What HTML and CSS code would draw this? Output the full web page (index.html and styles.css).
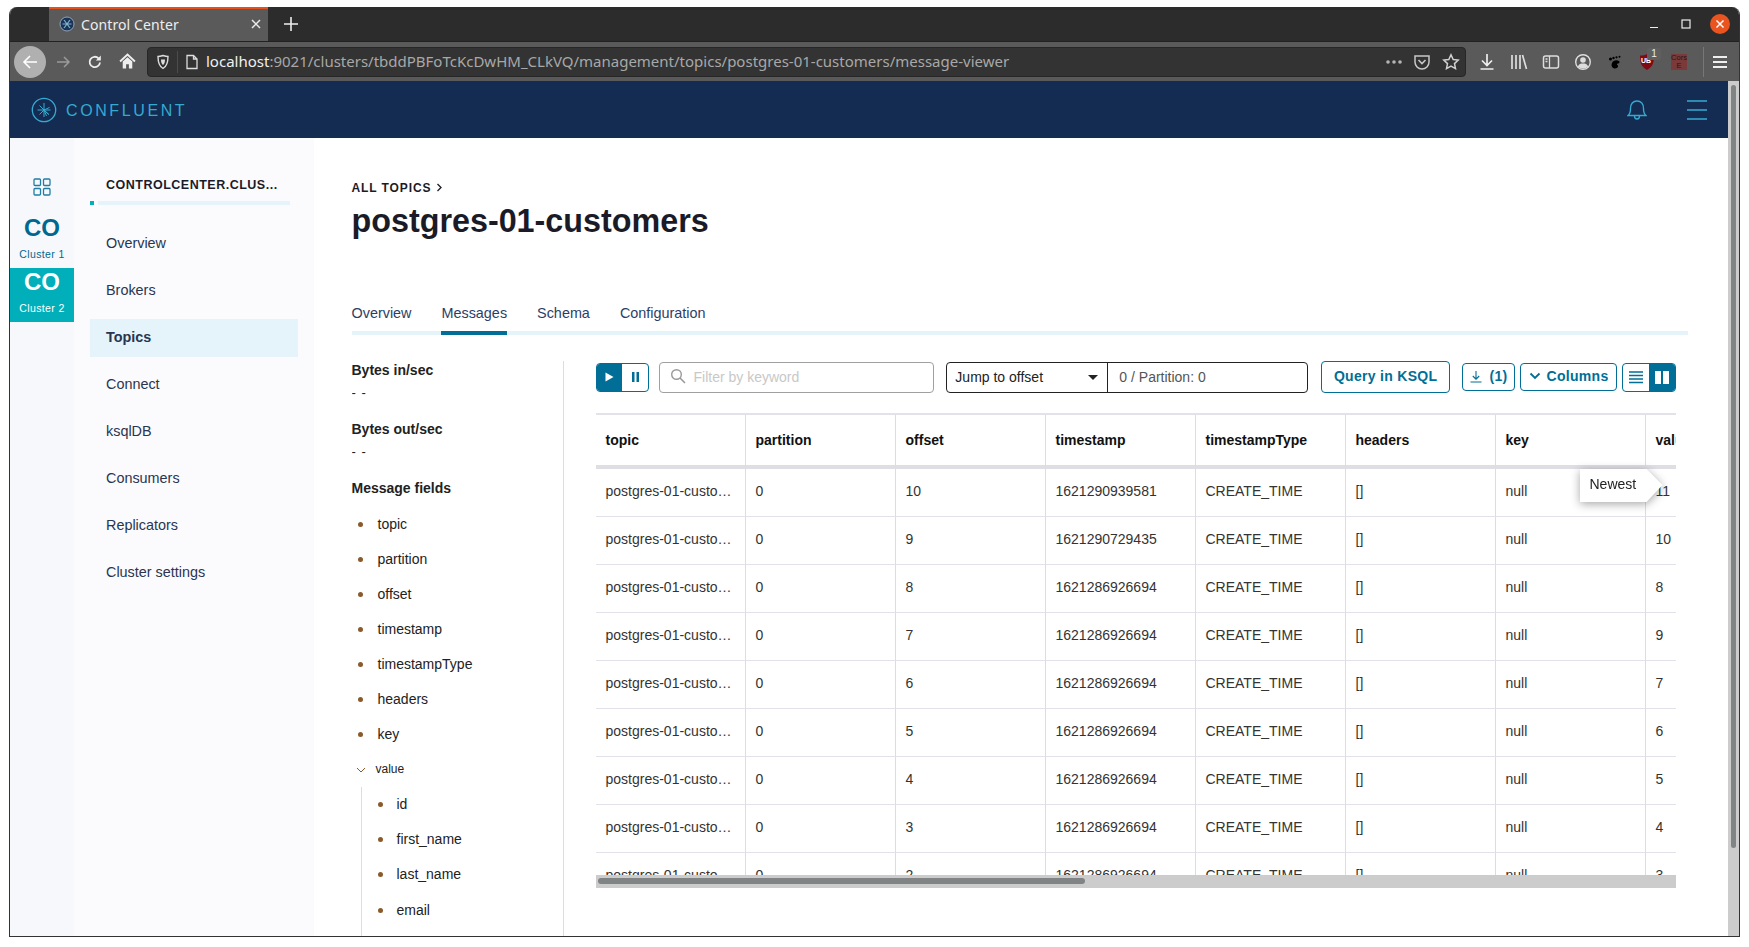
FILE: index.html
```html
<!DOCTYPE html>
<html lang="en">
<head>
  <meta charset="UTF-8">
  <title>Control Center</title>
  <link rel="stylesheet" href="styles.css">
</head>
<body>
<div class="window">

  <!-- Browser tabs -->
  <div class="tabbar">
    <div class="tab">
      <svg class="favicon" width="16" height="16" viewBox="0 0 16 16"><circle cx="8" cy="8" r="7" fill="#1c3358" stroke="#8fa3b8" stroke-width="1"/><path d="M5 4l6 8M11 4l-6 8M3.5 8h9" stroke="#7fb4cc" stroke-width="1.2"/></svg>
      <span class="tab-title">Control Center</span>
      <svg class="tab-close" width="12" height="12" viewBox="0 0 12 12"><path d="M2 2l8 8M10 2l-8 8" stroke="#e8e8e8" stroke-width="1.5"/></svg>
    </div>
    <svg class="tab-new" width="16" height="16" viewBox="0 0 16 16"><path d="M8 1v14M1 8h14" stroke="#eee" stroke-width="1.6"/></svg>
    <div class="winctl">
      <span class="winbtn"><svg width="12" height="12" viewBox="0 0 12 12"><path d="M2 9.5h8" stroke="#eee" stroke-width="1.2"/></svg></span>
      <span class="winbtn"><svg width="12" height="12" viewBox="0 0 12 12"><rect x="2" y="2" width="8" height="8" fill="none" stroke="#eee" stroke-width="1.2"/></svg></span>
      <span class="winbtn winbtn-close"><svg width="10" height="10" viewBox="0 0 10 10"><path d="M1 1l8 8M9 1l-8 8" stroke="#fff" stroke-width="1.5"/></svg></span>
    </div>
  </div>

  <!-- Browser toolbar -->
  <div class="toolbar">
    <span class="tbtn tbtn-back"><svg width="18" height="18" viewBox="0 0 18 18"><path d="M16 9H3M9 3L3 9l6 6" fill="none" stroke="#fff" stroke-width="1.6"/></svg></span>
    <span class="tbtn tbtn-fwd"><svg width="16" height="16" viewBox="0 0 16 16"><path d="M2 8h12M9 3l5 5-5 5" fill="none" stroke="#9a9a9a" stroke-width="1.5"/></svg></span>
    <span class="tbtn"><svg width="16" height="16" viewBox="0 0 16 16"><path d="M13 8.5A5.2 5.2 0 1 1 11.5 4.3" fill="none" stroke="#eee" stroke-width="1.8"/><path d="M13.8 1.5v5h-5z" fill="#eee"/></svg></span>
    <span class="tbtn"><svg width="17" height="17" viewBox="0 0 16 16"><path d="M1 8l7-6.5L15 8" fill="none" stroke="#eee" stroke-width="1.7"/><path d="M3.5 8L8 4l4.5 4v6.5H9.300v-4H6.700v4H3.500z" fill="#eee"/></svg></span>
    <div class="urlbar">
      <svg class="url-shield" width="16" height="16" viewBox="0 0 16 16"><path d="M3 2.5c3 0 4-.8 5-1 1 .2 2 1 5 1 0 5-.5 9.5-5 12-4.500-2.500-5-7-5-12z" fill="none" stroke="#ddd" stroke-width="1.4"/><path d="M6 5.5h4c0 2.5-.5 4.5-2 5.5-1.5-1-2-3-2-5.5z" fill="#ddd"/></svg>
      <span class="url-sep"></span>
      <svg class="url-page" width="16" height="16" viewBox="0 0 16 16"><path d="M3 1.500h6.500L13 5v9.500H3zM9.500 1.500V5H13" fill="none" stroke="#ddd" stroke-width="1.3"/></svg>
      <span class="url-text"><b>localhost</b>:9021/clusters/tbddPBFoTcKcDwHM_CLkVQ/management/topics/postgres-01-customers/message-viewer</span>
      <div class="url-actions">
        <span class="uact"><svg width="18" height="6" viewBox="0 0 18 6"><circle cx="3" cy="3" r="1.8" fill="#b5b5b5"/><circle cx="9" cy="3" r="1.8" fill="#b5b5b5"/><circle cx="15" cy="3" r="1.8" fill="#b5b5b5"/></svg></span>
        <span class="uact"><svg width="18" height="18" viewBox="0 0 18 18"><path d="M2 3h14v6a7 7 0 0 1-14 0z" fill="none" stroke="#c8c8c8" stroke-width="1.5"/><path d="M5.5 7L9 10.5 12.5 7" fill="none" stroke="#c8c8c8" stroke-width="1.6"/></svg></span>
        <span class="uact"><svg width="18" height="18" viewBox="0 0 18 18"><path d="M9 1.8l2.2 4.700 5 .6-3.700 3.500 1 5L9 13.200l-4.500 2.400 1-5L1.800 7.100l5-.6z" fill="none" stroke="#d0d0d0" stroke-width="1.5"/></svg></span>
      </div>
    </div>
    <div class="tools">
      <span class="tbtn"><svg width="18" height="18" viewBox="0 0 18 18"><path d="M9 1v11M4 7.500L9 12.500l5-5M2.500 16h13" fill="none" stroke="#eee" stroke-width="1.7"/></svg></span>
      <span class="tbtn"><svg width="18" height="18" viewBox="0 0 18 18"><path d="M2 2v14M6 2v14M10 2v14M12.500 2l4 14" fill="none" stroke="#ddd" stroke-width="1.7"/></svg></span>
      <span class="tbtn"><svg width="18" height="18" viewBox="0 0 18 18"><rect x="1.5" y="3" width="15" height="12" rx="2" fill="none" stroke="#ddd" stroke-width="1.5"/><path d="M7.500 3v12M3.500 6h2M3.500 8.500h2" stroke="#ddd" stroke-width="1.3"/></svg></span>
      <span class="tbtn"><svg width="18" height="18" viewBox="0 0 18 18"><circle cx="9" cy="9" r="7.3" fill="none" stroke="#ddd" stroke-width="1.4"/><circle cx="9" cy="7" r="2.8" fill="#ddd"/><path d="M3.800 13.500c1-2.500 3-3 5.200-3s4.200.5 5.200 3c-3 2.500-7.400 2.500-10.400 0z" fill="#ddd"/></svg></span>
      <span class="tbtn"><svg width="16" height="16" viewBox="0 0 16 16"><path d="M5 9c1-3 5-3.500 7-2 1 1 .5 2.500-1 2.500-1.500.3-1 1.500-.2 1.800.8 1-.3 3.500-3 3.200C4.800 14.200 4 11.500 5 9z" fill="#000"/><circle cx="3.5" cy="5" r="1.5" fill="#000"/><circle cx="6.5" cy="4" r="1.2" fill="#000"/><circle cx="9.5" cy="3.3" r="1.1" fill="#000"/><circle cx="12.5" cy="2.8" r="1" fill="#000"/></svg></span>
      <span class="tbtn tbtn-ub">
        <svg width="16" height="18" viewBox="0 0 16 18"><path d="M1 2.500C4 2.500 6 2 8 1c2 1 4 1.500 7 1.500 0 6-.5 11-7 14.500C1.500 13.500 1 8.500 1 2.500z" fill="#800a14"/></svg>
        <span class="ub-text">UB</span>
        <span class="ub-badge">1</span>
      </span>
      <span class="tbtn"><span class="cors">Cors<br>E</span></span>
      <span class="tool-sep"></span>
      <span class="tbtn"><svg width="16" height="14" viewBox="0 0 16 14"><path d="M1 2h14M1 7h14M1 12h14" stroke="#eee" stroke-width="2"/></svg></span>
    </div>
  </div>

  <div class="viewport">
    <div class="app">

      <!-- Top bar -->
      <header class="topnav">
        <svg class="logo-mark" width="26" height="26" viewBox="0 0 26 26"><circle cx="13" cy="13" r="11.7" fill="none" stroke="#36a9d0" stroke-width="1.3"/><path d="M13 6v14M6.500 13h13M8.500 8.500l9 9M13 13l5.500-2.500M13 13l5 4.500M13 13l2.500 6M13 13l-4.500 4.500" stroke="#36a9d0" stroke-width="1"/></svg>
        <span class="logo-text">CONFLUENT</span>
        <div class="topnav-right">
          <svg width="20" height="22" viewBox="0 0 20 22"><path d="M1 16.500c2-1.500 2.500-3 2.500-7C3.500 5 6 2 10 2s6.500 3 6.500 7.500c0 4 .5 5.500 2.500 7z" fill="none" stroke="#36a9d0" stroke-width="1.4"/><path d="M7.500 17c0 4 5 4 5 0" fill="none" stroke="#36a9d0" stroke-width="1.4"/></svg>
          <svg width="20" height="20" viewBox="0 0 20 20"><path d="M0 1h20M0 10h20M0 19h20" stroke="#36a9d0" stroke-width="1.3"/></svg>
        </div>
      </header>

      <div class="content">

        <!-- Cluster switcher -->
        <aside class="rail">
          <svg class="rail-grid" width="18" height="18" viewBox="0 0 18 18"><g fill="none" stroke="#1f7ea5" stroke-width="1.3"><rect x="1" y="1" width="6.500" height="6.500" rx="1"/><rect x="10.500" y="1" width="6.500" height="6.500" rx="1"/><rect x="1" y="10.500" width="6.500" height="6.500" rx="1"/><rect x="10.500" y="10.500" width="6.500" height="6.500" rx="1"/></g></svg>
          <div class="cluster">
            <div class="cluster-co">CO</div>
            <div class="cluster-name">Cluster 1</div>
          </div>
          <div class="cluster cluster-active">
            <div class="cluster-co">CO</div>
            <div class="cluster-name">Cluster 2</div>
          </div>
        </aside>

        <!-- Section nav -->
        <nav class="sidenav">
          <div class="sidenav-title">CONTROLCENTER.CLUS...</div>
          <div class="sidenav-rule"><span class="rule-dot"></span><span class="rule-line"></span></div>
          <a class="nav-item">Overview</a>
          <a class="nav-item">Brokers</a>
          <a class="nav-item nav-active">Topics</a>
          <a class="nav-item">Connect</a>
          <a class="nav-item">ksqlDB</a>
          <a class="nav-item">Consumers</a>
          <a class="nav-item">Replicators</a>
          <a class="nav-item">Cluster settings</a>
        </nav>

        <main class="main">
          <div class="crumb">ALL TOPICS <svg width="7" height="9" viewBox="0 0 7 9"><path d="M1.500 1l3.500 3.500L1.500 8" fill="none" stroke="#1b1b28" stroke-width="1.3"/></svg></div>
          <h1 class="topic-title">postgres-01-customers</h1>

          <div class="tabs">
            <a class="tab-link">Overview</a>
            <a class="tab-link tab-link-active">Messages</a>
            <a class="tab-link">Schema</a>
            <a class="tab-link">Configuration</a>
          </div>

          <div class="messages">
            <!-- Stats and fields -->
            <section class="fields">
              <div class="stat-label">Bytes in/sec</div>
              <div class="stat-value">- -</div>
              <div class="stat-label">Bytes out/sec</div>
              <div class="stat-value">- -</div>
              <div class="stat-label">Message fields</div>
              <ul class="field-list">
                <li>topic</li>
                <li>partition</li>
                <li>offset</li>
                <li>timestamp</li>
                <li>timestampType</li>
                <li>headers</li>
                <li>key</li>
                <li class="field-group">
                  <svg width="10" height="6" viewBox="0 0 10 6"><path d="M1 1l4 4 4-4" fill="none" stroke="#8a5a2b" stroke-width="1"/></svg>
                  value
                </li>
              </ul>
              <ul class="field-list field-nested">
                <li>id</li>
                <li>first_name</li>
                <li>last_name</li>
                <li>email</li>
              </ul>
            </section>

            <section class="viewer">
              <div class="controls">
                <div class="playpause">
                  <span class="pp-btn pp-on"><svg width="10" height="10" viewBox="0 0 10 10"><path d="M1.500 .5l8 4.500-8 4.500z" fill="#fff"/></svg></span>
                  <span class="pp-btn"><svg width="9" height="10" viewBox="0 0 9 10"><path d="M1 0h2.500v10H1zM5.500 0H8v10H5.500z" fill="#006e96"/></svg></span>
                </div>
                <div class="filter">
                  <svg class="filter-icon" width="16" height="16" viewBox="0 0 16 16"><circle cx="6.5" cy="6.5" r="4.8" fill="none" stroke="#999" stroke-width="1.4"/><path d="M10 10l5 5" stroke="#999" stroke-width="1.6"/></svg>
                  <span>Filter by keyword</span>
                </div>
                <div class="jump">
                  <div class="jump-select">Jump to offset <span class="caret"></span></div>
                  <div class="jump-value">0 / Partition: 0</div>
                </div>
                <a class="btn-outline btn-ksql">Query in KSQL</a>
                <a class="btn-outline btn-small btn-export"><svg width="12" height="13" viewBox="0 0 12 13"><path d="M6 1v8M2.800 6L6 9.200 9.200 6M.5 12h11" fill="none" stroke="#006e96" stroke-width="1.1"/></svg> (1)</a>
                <a class="btn-outline btn-small btn-columns"><svg width="12" height="8" viewBox="0 0 12 8"><path d="M1.500 1.500L6 6l4.500-4.500" fill="none" stroke="#006e96" stroke-width="1.8"/></svg> Columns</a>
                <div class="viewtoggle">
                  <span class="vt-btn"><svg width="14" height="13" viewBox="0 0 14 13"><path d="M0 1h14M0 4.500h14M0 8h14M0 11.500h14" stroke="#006e96" stroke-width="1.5"/></svg></span>
                  <span class="vt-btn vt-on"><svg width="14" height="13" viewBox="0 0 14 13"><path d="M0 0h6v13H0zM8 0h6v13H8z" fill="#fff"/></svg></span>
                </div>
              </div>

              <div class="table-wrap">
                <table class="msg-table">
                  <thead>
                    <tr><th>topic</th><th>partition</th><th>offset</th><th>timestamp</th><th>timestampType</th><th>headers</th><th>key</th><th>value</th></tr>
                  </thead>
                  <tbody>
                    <tr><td>postgres-01-custo…</td><td>0</td><td>10</td><td>1621290939581</td><td>CREATE_TIME</td><td>[]</td><td>null</td><td>11</td></tr>
                    <tr><td>postgres-01-custo…</td><td>0</td><td>9</td><td>1621290729435</td><td>CREATE_TIME</td><td>[]</td><td>null</td><td>10</td></tr>
                    <tr><td>postgres-01-custo…</td><td>0</td><td>8</td><td>1621286926694</td><td>CREATE_TIME</td><td>[]</td><td>null</td><td>8</td></tr>
                    <tr><td>postgres-01-custo…</td><td>0</td><td>7</td><td>1621286926694</td><td>CREATE_TIME</td><td>[]</td><td>null</td><td>9</td></tr>
                    <tr><td>postgres-01-custo…</td><td>0</td><td>6</td><td>1621286926694</td><td>CREATE_TIME</td><td>[]</td><td>null</td><td>7</td></tr>
                    <tr><td>postgres-01-custo…</td><td>0</td><td>5</td><td>1621286926694</td><td>CREATE_TIME</td><td>[]</td><td>null</td><td>6</td></tr>
                    <tr><td>postgres-01-custo…</td><td>0</td><td>4</td><td>1621286926694</td><td>CREATE_TIME</td><td>[]</td><td>null</td><td>5</td></tr>
                    <tr><td>postgres-01-custo…</td><td>0</td><td>3</td><td>1621286926694</td><td>CREATE_TIME</td><td>[]</td><td>null</td><td>4</td></tr>
                    <tr><td>postgres-01-custo…</td><td>0</td><td>2</td><td>1621286926694</td><td>CREATE_TIME</td><td>[]</td><td>null</td><td>3</td></tr>
                  </tbody>
                </table>
                <div class="tooltip"><div class="tooltip-body">Newest</div></div>
              </div>
              <div class="hscroll"><div class="hscroll-thumb"></div></div>
            </section>
          </div>
        </main>
      </div>
    </div>

    <div class="vscroll"><div class="vscroll-thumb"></div></div>
  </div>
</div>
</body>
</html>
```

FILE: styles.css
```css
body {
  margin: 0;
  background: #fff;
  font-family: "Liberation Sans", Arial, sans-serif;
  color: #222;
  overflow: hidden;
}

.window {
  margin: 7px 9px 0 9px;
  height: 930px;
  box-sizing: border-box;
  border-left: 1px solid #333;
  border-right: 1px solid #333;
  border-bottom: 1px solid #333;
  border-radius: 8px 8px 0 0;
  overflow: hidden;
  display: flex;
  flex-direction: column;
}

/* Browser tabs */
.tabbar {
  height: 34px;
  flex-shrink: 0;
  background: #2c2c2c;
  display: flex;
  align-items: stretch;
  padding-left: 39px;
  box-sizing: border-box;
}

.tab {
  width: 219px;
  box-sizing: border-box;
  background: #5a5a5a;
  border-top: 2px solid #e4501e;
  display: flex;
  align-items: center;
  padding: 0 0 2px 10px;
  color: #eee;
  font-family: "Noto Sans", sans-serif;
  font-size: 14px;
}

.tab-title {
  margin-left: 6px;
  flex: 1;
  letter-spacing: 0.1px;
}

.tab-close {
  margin-right: 6px;
}

.tab-new {
  align-self: center;
  margin-left: 15px;
}

.winctl {
  margin-left: auto;
  display: flex;
  align-items: center;
  padding-right: 3px;
}

.winbtn {
  width: 32px;
  height: 22px;
  display: flex;
  align-items: center;
  justify-content: center;
}

.winbtn-close {
  margin-left: 2px;
}

.winbtn-close svg {
  background: #e95420;
  border-radius: 50%;
  padding: 5px;
}

/* Browser toolbar */
.toolbar {
  height: 40px;
  flex-shrink: 0;
  background: #5a5a5a;
  border-top: 1px solid #222;
  box-sizing: border-box;
  display: flex;
  align-items: center;
  padding: 0 3px 0 4px;
}

.tbtn {
  width: 32px;
  height: 32px;
  flex-shrink: 0;
  display: flex;
  align-items: center;
  justify-content: center;
  position: relative;
}

.tbtn-back {
  background: #b0b0b0;
  border-radius: 50%;
}

.tbtn-fwd {
  width: 33px;
}

.urlbar {
  width: 1319px;
  height: 30px;
  margin-left: 4px;
  box-sizing: border-box;
  background: #333;
  border: 1px solid #272727;
  border-radius: 4px;
  display: flex;
  align-items: center;
  padding-left: 7px;
  color: #a8a8a8;
}

.url-sep {
  width: 1px;
  height: 22px;
  background: #4c4c4c;
  margin: 0 6px 0 6px;
}

.url-text {
  margin-left: 6px;
  margin-top: -2px;
  font-family: "Noto Sans", sans-serif;
  font-size: 15px;
  white-space: nowrap;
}

.url-text b {
  font-weight: normal;
  color: #f0f0f0;
}

.url-actions {
  margin-left: auto;
  display: flex;
  align-items: center;
}

.uact {
  width: 28.5px;
  display: flex;
  justify-content: center;
}

.tools {
  display: flex;
  align-items: center;
  margin-left: 5px;
}

.ub-text {
  position: absolute;
  left: 10px;
  top: 11px;
  font-size: 7px;
  font-weight: bold;
  color: #fff;
}

.ub-badge {
  position: absolute;
  left: 16px;
  top: 2px;
  width: 14px;
  height: 12px;
  background: #5f5f5f;
  border-radius: 2px;
  color: #eee;
  font-size: 10px;
  line-height: 12px;
  text-align: center;
}

.cors {
  display: block;
  width: 16px;
  height: 16px;
  background: #7a3a3a;
  color: #2c1414;
  font-size: 7.5px;
  line-height: 8px;
  text-align: center;
}

.tool-sep {
  width: 1px;
  height: 30px;
  background: #777;
  margin-left: 8px;
}

/* Page */
.viewport {
  flex: 1;
  min-height: 0;
  display: flex;
}

.app {
  flex: 1;
  min-width: 0;
  display: flex;
  flex-direction: column;
}

.vscroll {
  width: 11px;
  flex-shrink: 0;
  background: #ccc;
  box-sizing: border-box;
  padding: 4px 3px 0 3px;
}

.vscroll-thumb {
  height: 763px;
  background: #808484;
  border-radius: 3px;
}

.topnav {
  height: 57px;
  flex-shrink: 0;
  background: #142c52;
  display: flex;
  align-items: center;
  padding-left: 21px;
}

.logo-text {
  margin-left: 9px;
  margin-top: 2px;
  color: #36a9d0;
  font-size: 16px;
  letter-spacing: 2.6px;
}

.topnav-right {
  margin-left: auto;
  display: flex;
  align-items: center;
  gap: 40px;
  padding-right: 21px;
}

.content {
  flex: 1;
  min-height: 0;
  display: flex;
}

/* Cluster rail */
.rail {
  width: 64px;
  flex-shrink: 0;
  background: #f7f8fb;
  padding-top: 40px;
  box-sizing: border-box;
  text-align: center;
}

.rail-grid {
  display: block;
  margin: 0 auto 18px;
}

.cluster {
  height: 54px;
  color: #00688f;
}

.cluster-co {
  font-size: 24px;
  font-weight: bold;
  line-height: 28px;
}

.cluster-name {
  font-size: 10.5px;
  letter-spacing: 0.4px;
  line-height: 14px;
  margin-top: 5px;
}

.cluster-active {
  background: #00afba;
  color: #fff;
}

/* Section nav */
.sidenav {
  width: 240px;
  flex-shrink: 0;
  background: #fbfbfd;
  box-sizing: border-box;
  padding: 0 16px;
}

.sidenav-title {
  margin-top: 40px;
  padding-left: 16px;
  font-size: 12.5px;
  line-height: 14px;
  font-weight: bold;
  letter-spacing: 0.5px;
  color: #1b1b28;
}

.sidenav-rule {
  display: flex;
  margin: 9px 8px 19.5px 0;
  height: 4px;
  gap: 4px;
}

.rule-dot {
  width: 4px;
  background: #00afba;
}

.rule-line {
  flex: 1;
  background: #e5f3fb;
}

.nav-item {
  display: block;
  height: 38px;
  margin-bottom: 9.1px;
  padding-left: 16px;
  font-size: 14.4px;
  line-height: 36px;
  color: #2a3550;
}

.nav-active {
  background: #e5f3fb;
  font-weight: bold;
}

/* Main column */
.main {
  flex: 1;
  min-width: 0;
  padding: 0 40px 0 37.5px;
  display: flex;
  flex-direction: column;
}

.crumb {
  margin-top: 43px;
  font-size: 12px;
  line-height: 14px;
  font-weight: bold;
  letter-spacing: 0.9px;
  color: #1b1b28;
}

.topic-title {
  margin: 6px 0 0;
  font-size: 32.3px;
  line-height: 40px;
  font-weight: bold;
  color: #1b1b28;
}

.tabs {
  margin-top: 57px;
  display: flex;
  gap: 30px;
  border-bottom: 4px solid #e5f3fb;
  height: 33px;
}

.tab-link {
  font-size: 14.4px;
  line-height: 24px;
  padding-top: 3px;
  color: #2c3e66;
  height: 33px;
  box-sizing: border-box;
}

.tab-link-active {
  height: 37px;
  border-bottom: 4px solid #006e96;
}

.messages {
  flex: 1;
  min-height: 0;
  display: flex;
  margin-top: 26px;
}

/* Left column */
.fields {
  width: 212px;
  flex-shrink: 0;
  box-sizing: border-box;
  padding-top: 1px;
  border-right: 1px solid #ddd;
  overflow: hidden;
}

.stat-label {
  font-size: 14px;
  font-weight: bold;
  line-height: 16px;
  color: #222;
}

.stat-value {
  font-size: 13px;
  line-height: 16px;
  margin: 7px 0 20px;
  letter-spacing: 1px;
}

.field-list {
  list-style: none;
  margin: 10.5px 0 0;
  padding: 0;
}

.field-list li {
  height: 35.1px;
  line-height: 35px;
  font-size: 14px;
  padding-left: 26px;
  position: relative;
  color: #222;
}

.field-list li::before {
  content: "";
  position: absolute;
  left: 6px;
  top: 15px;
  width: 5px;
  height: 5px;
  border-radius: 50%;
  background: #8a5a2b;
}

.field-list .field-group {
  font-size: 12px;
  padding-left: 24px;
}

.field-list .field-group::before {
  display: none;
}

.field-group svg {
  position: absolute;
  left: 4px;
  top: 15px;
}

.field-nested {
  margin: 0 0 0 9px;
  border-left: 1px solid #ddd;
  height: 200px;
}

.field-nested li {
  padding-left: 35px;
}

.field-nested li::before {
  left: 16px;
}

/* Viewer */
.viewer {
  flex: 1;
  min-width: 0;
  padding: 0 12px 0 32px;
}

.controls {
  height: 32px;
  display: flex;
  align-items: center;
  color: #222;
  font-size: 14px;
}

.playpause {
  width: 54px;
  height: 29px;
  box-sizing: border-box;
  border: 1px solid #006e96;
  border-radius: 4px;
  display: flex;
  overflow: hidden;
}

.pp-btn {
  flex: 1;
  display: flex;
  align-items: center;
  justify-content: center;
}

.pp-on {
  background: #006e96;
}

.filter {
  width: 275px;
  height: 31px;
  box-sizing: border-box;
  margin-left: 10px;
  border: 1px solid #a0a0a0;
  border-radius: 4px;
  display: flex;
  align-items: center;
  padding-left: 12px;
  gap: 5px;
  color: #c8c8c8;
}

.filter-icon {
  margin: -3px 2px 0 -2px;
}

.jump {
  width: 362px;
  height: 31px;
  box-sizing: border-box;
  margin-left: 12px;
  border: 1px solid #222;
  border-radius: 4px;
  display: flex;
  align-items: center;
}

.jump-select {
  width: 161px;
  height: 100%;
  box-sizing: border-box;
  padding: 0 9px 0 8px;
  border-right: 1px solid #222;
  display: flex;
  align-items: center;
  justify-content: space-between;
}

.caret {
  width: 0;
  height: 0;
  border-left: 5px solid transparent;
  border-right: 5px solid transparent;
  border-top: 5px solid #222;
}

.jump-value {
  padding-left: 11px;
  color: #555;
}

.btn-outline {
  box-sizing: border-box;
  border: 1px solid #006e96;
  border-radius: 4px;
  color: #006e96;
  font-weight: bold;
  display: flex;
  align-items: center;
  justify-content: center;
  letter-spacing: 0.3px;
}

.btn-ksql {
  width: 129px;
  height: 32px;
  margin-left: 13px;
  padding-bottom: 2px;
}

.btn-small {
  height: 28px;
  padding-bottom: 2px;
}

.btn-export {
  width: 53px;
  margin-left: 12px;
  gap: 8px;
}

.btn-columns {
  width: 97px;
  margin-left: 5px;
  gap: 6px;
}

.viewtoggle {
  width: 54px;
  height: 29px;
  box-sizing: border-box;
  margin-left: 5px;
  border: 1px solid #006e96;
  border-radius: 4px;
  display: flex;
  overflow: hidden;
}

.vt-btn {
  flex: 1;
  display: flex;
  align-items: center;
  justify-content: center;
}

.vt-on {
  background: #006e96;
}

/* Message table */
.table-wrap {
  position: relative;
  margin-top: 20px;
  height: 462px;
  overflow: hidden;
}

.msg-table {
  width: 1200px;
  table-layout: fixed;
  border-collapse: separate;
  border-spacing: 0;
  font-size: 14px;
  border-top: 2px solid #e2e2e8;
}

.msg-table th {
  height: 54px;
  padding: 0 10px;
  box-sizing: border-box;
  text-align: left;
  font-weight: bold;
  color: #111;
  border-bottom: 4px solid #dedee4;
  border-right: 1px solid #ddd;
}

.msg-table td {
  height: 48px;
  padding: 0 10px 4px;
  box-sizing: border-box;
  color: #333;
  border-bottom: 1px solid #e2e2e8;
  border-right: 1px solid #ddd;
  white-space: nowrap;
  overflow: hidden;
}

.tooltip {
  position: absolute;
  left: 984px;
  top: 56px;
  filter: drop-shadow(0 2px 5px rgba(0, 0, 0, 0.35));
}

.tooltip-body {
  width: 83px;
  height: 33px;
  box-sizing: border-box;
  padding-left: 10px;
  font-size: 14px;
  line-height: 30px;
  color: #222;
  background: #fff;
  clip-path: polygon(0 0, 67px 0, 83px 16px, 67px 33px, 0 33px);
}

.hscroll {
  height: 13px;
  background: #ccc;
  padding: 3px 0 0 2px;
  box-sizing: border-box;
}

.hscroll-thumb {
  width: 487px;
  height: 6px;
  background: #808484;
  border-radius: 3px;
}
```
